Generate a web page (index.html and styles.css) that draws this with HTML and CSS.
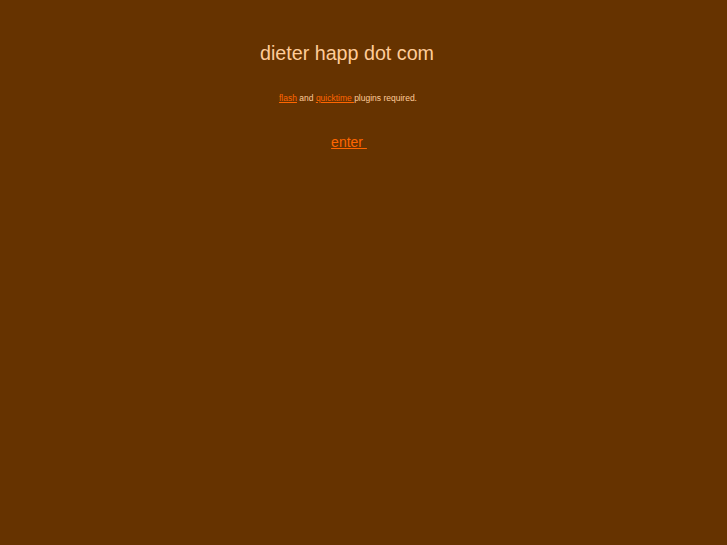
FILE: index.html
```html
<!DOCTYPE html>
<html>
<head>
<meta charset="utf-8">
<link rel="stylesheet" href="styles.css">
</head>
<body>
<div class="wrap">
  <h1 class="title">dieter happ dot com</h1>
  <p class="note"><a href="#">flash</a> and <a href="#">quicktime </a>plugins required.</p>
  <p class="enter"><a href="#">enter&nbsp;</a></p>
</div>
</body>
</html>
```
FILE: styles.css
```css
html, body {
  margin: 0;
  padding: 0;
  background: #663300;
}
body {
  font-family: "Liberation Sans", Arial, Helvetica, sans-serif;
  color: #ffcc99;
  padding: 8px;
}
.wrap {
  width: 678px;
  text-align: center;
}
.title {
  margin: 33px 0 0;
  font-size: 19.7px;
  font-weight: normal;
  line-height: 24px;
  color: #ffcc99;
}
.note {
  margin: 27px 0 0;
  padding-left: 2px;
  font-size: 8.5px;
  line-height: 12px;
  color: #ffcc99;
}
.enter {
  margin: 29px 0 0;
  padding-left: 4px;
  font-size: 14px;
  line-height: 18px;
}
a {
  color: #ff6600;
}
```
